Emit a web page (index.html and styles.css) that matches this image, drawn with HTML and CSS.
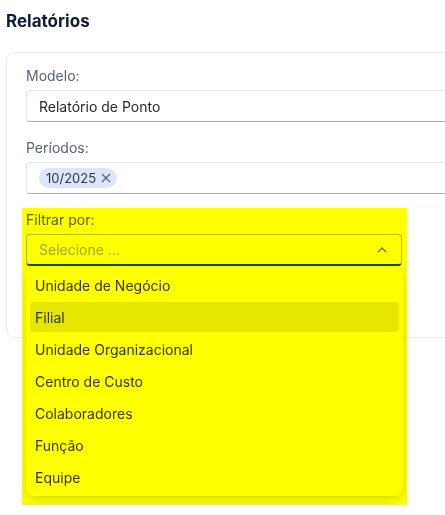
FILE: index.html
```html
<!DOCTYPE html>
<html lang="pt-BR">
<head>
  <meta charset="UTF-8" />
  <meta name="viewport" content="width=device-width, initial-scale=1" />
  <title>Relatórios</title>
  <link rel="stylesheet" href="styles.css">
</head>
<body>

  <main class="page">
    <h1 class="page-title">Relatórios</h1>

    <section class="card">
      <div class="field">
        <label>Modelo:</label>
        <div class="input">Relatório de Ponto</div>
      </div>

      <div class="field">
        <label>Períodos:</label>
        <div class="input input-chips">
          <span class="chip">10/2025
            <svg class="chip-close" viewBox="0 0 10 10" width="10" height="10">
              <path d="M1 1 L9 9 M9 1 L1 9" stroke="currentColor" stroke-width="1.1" fill="none" />
            </svg>
          </span>
        </div>
      </div>

      <div class="field field-filter">
        <label>Filtrar por:</label>
        <div class="select is-open">
          <span class="placeholder">Selecione ...</span>
          <svg class="caret" viewBox="0 0 10 6" width="10" height="6">
            <path d="M1 5 L5 1 L9 5" stroke="currentColor" stroke-width="1.4" fill="none" />
          </svg>
        </div>

        <!-- Options list -->
        <ul class="dropdown">
          <li>Unidade de Negócio</li>
          <li class="hover">Filial</li>
          <li>Unidade Organizacional</li>
          <li>Centro de Custo</li>
          <li>Colaboradores</li>
          <li>Função</li>
          <li>Equipe</li>
        </ul>

        <div class="highlight"></div>
      </div>
    </section>
  </main>

</body>
</html>
```

FILE: styles.css
```css
/* Reset */
* {
  margin: 0; padding: 0; box-sizing: border-box;
  font-family: 'Inter', 'Noto Sans', sans-serif;
}

html {
  overflow: hidden;
}
body {
  background: #fff;
  min-height: 515px;
}

.page {
  padding: 0 6px;
}

.page-title {
  font-size: 17px;
  line-height: 24px;
  font-weight: 700;
  color: #0f1b36;
  margin: 9px 0 19px;
}

/* Card */
.card {
  width: 600px;
  border: 1px solid #ececf1;
  border-radius: 8px;
  padding: 13px 0 71px 19px;
}

.field {
  margin-bottom: 16px;
}
.field label {
  display: block;
  font-size: 14px;
  line-height: 20px;
  color: #55627c;
  margin-bottom: 4px;
}

.input {
  height: 32px;
  border: 1px solid #e3e3f1;
  border-bottom-color: #a3abbd;
  border-radius: 4px;
  padding: 0 12px;
  display: flex;
  align-items: center;
  font-size: 14px;
  color: #1f2430;
}

.chip {
  display: inline-flex;
  align-items: center;
  gap: 5px;
  height: 20px;
  padding: 0 6px 0 7px;
  border-radius: 10px;
  background: #dce5f9;
  font-size: 13px;
  color: #2f3440;
}
.chip-close {
  color: #555c6c;
}

/* Filter select */
.field-filter {
  position: relative;
  width: 376px;
  margin-bottom: 0;
}

.select {
  height: 32px;
  border: 1px solid #b3b8c6;
  border-bottom: 2px solid #1d4fb0;
  border-radius: 4px;
  padding: 0 12px;
  display: flex;
  align-items: center;
  justify-content: space-between;
  font-size: 14px;
}
.select .placeholder {
  color: #a1a6b3;
}
.select .caret {
  color: #6c7280;
  margin-right: 2px;
}

.dropdown {
  position: absolute;
  top: 57px;
  left: 0;
  width: 377px;
  list-style: none;
  background: #fff;
  border-radius: 8px;
  padding: 3px 4px 4px;
  display: flex;
  flex-direction: column;
  gap: 2px;
  box-shadow: 0 4px 14px rgb(0 0 0 / 0.12), 0 1px 3px rgb(0 0 0 / 0.06);
  z-index: 10;
}
.dropdown li {
  height: 30px;
  display: flex;
  align-items: center;
  padding: 0 5px;
  border-radius: 4px;
  font-size: 14px;
  color: #343434;
}
.dropdown li.hover {
  background: #e6e6e6;
}

/* Yellow marker over the filter block */
.highlight {
  position: absolute;
  top: -2px;
  left: -4px;
  width: 385px;
  height: 297px;
  background: #ffff00;
  mix-blend-mode: multiply;
  pointer-events: none;
  z-index: 20;
}
```
